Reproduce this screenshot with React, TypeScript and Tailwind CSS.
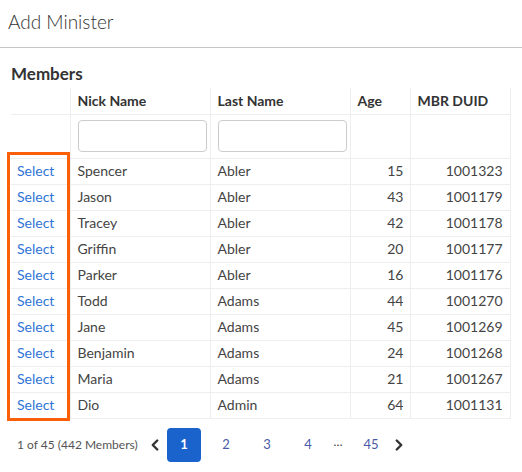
import { ChevronLeft, ChevronRight } from 'lucide-react';

const MEMBERS = [
  { nick: 'Spencer', last: 'Abler', age: 15, duid: 1001323 },
  { nick: 'Jason', last: 'Abler', age: 43, duid: 1001179 },
  { nick: 'Tracey', last: 'Abler', age: 42, duid: 1001178 },
  { nick: 'Griffin', last: 'Abler', age: 20, duid: 1001177 },
  { nick: 'Parker', last: 'Abler', age: 16, duid: 1001176 },
  { nick: 'Todd', last: 'Adams', age: 44, duid: 1001270 },
  { nick: 'Jane', last: 'Adams', age: 45, duid: 1001269 },
  { nick: 'Benjamin', last: 'Adams', age: 24, duid: 1001268 },
  { nick: 'Maria', last: 'Adams', age: 21, duid: 1001267 },
  { nick: 'Dio', last: 'Admin', age: 64, duid: 1001131 },
];

export default function App() {
  return (
    <div className="w-[522px] h-[472px] bg-white overflow-hidden font-['Lato','Open_Sans',sans-serif] text-[#333]">
      {/* modal header */}
      <div className="h-[48px] border-b border-[#c4c4c4] px-[8px] pt-[9px]">
        <h1 className="text-[19px] font-light text-[#333] leading-[26px]">Add Minister</h1>
      </div>

      <div className="px-[11px] pt-[14px]">
        <h2 className="text-[17px] font-bold text-[#333] leading-[24px] mb-[2px]">Members</h2>

        <div className="relative w-[499px]">
          <table className="w-[499px] border-collapse table-fixed text-[14px]">
            <colgroup>
              <col className="w-[59px]" />
              <col className="w-[140px]" />
              <col className="w-[140px]" />
              <col className="w-[60px]" />
              <col className="w-[100px]" />
            </colgroup>
            <thead>
              <tr className="h-[26px] border-b border-[#eeeeee]">
                <th className="border-r border-[#eeeeee]" />
                <th className="border-r border-[#eeeeee] text-left font-bold px-[7px]">Nick Name</th>
                <th className="border-r border-[#eeeeee] text-left font-bold px-[7px]">Last Name</th>
                <th className="border-r border-[#eeeeee] text-left font-bold px-[7px]">Age</th>
                <th className="border-r border-[#eeeeee] text-left font-bold px-[7px]">MBR DUID</th>
              </tr>
              <tr className="h-[44px] border-b border-[#eeeeee]">
                <th className="border-r border-[#eeeeee]" />
                <th className="border-r border-[#eeeeee] px-[7px]">
                  <input className="block w-[129px] h-[32px] border border-[#cccccc] rounded-[4px]" />
                </th>
                <th className="border-r border-[#eeeeee] px-[7px]">
                  <input className="block w-[129px] h-[32px] border border-[#cccccc] rounded-[4px]" />
                </th>
                <th className="border-r border-[#eeeeee]" />
                <th className="border-r border-[#eeeeee]" />
              </tr>
            </thead>
            <tbody>
              {MEMBERS.map((m) => (
                <tr key={m.duid} className="h-[26px] border-b border-[#eeeeee] text-[#444] leading-[24px]">
                  <td className="border-r border-[#eeeeee] pl-[6px] pb-[1px] text-[#2f74d6]">Select</td>
                  <td className="border-r border-[#eeeeee] px-[7px] pb-[1px]">{m.nick}</td>
                  <td className="border-r border-[#eeeeee] px-[7px] pb-[1px]">{m.last}</td>
                  <td className="border-r border-[#eeeeee] px-[6px] pb-[1px] text-right">{m.age}</td>
                  <td className="border-r border-[#eeeeee] px-[7px] pb-[1px] text-right">{m.duid}</td>
                </tr>
              ))}
            </tbody>
          </table>
          {/* highlight around select column */}
          <div className="absolute left-[-4px] top-[64px] w-[63px] h-[269px] border-[3px] border-[#fb6008] pointer-events-none" />
        </div>

        {/* pagination */}
        <div className="flex items-center mt-[9px] h-[34px]">
          <span className="ml-[6px] text-[12px] text-[#555] w-[128px]">1 of 45 (442 Members)</span>
          <ChevronLeft className="w-[18px] h-[18px] text-[#333] ml-[1px]" strokeWidth={3.2} />
          <button className="ml-[3px] w-[34px] h-[34px] rounded-[4px] bg-[#1a62cc] text-white text-[13px] font-bold">1</button>
          <span className="w-[50px] text-center text-[13px] text-[#4a5aa8]">2</span>
          <span className="w-[32px] text-center text-[13px] text-[#4a5aa8]">3</span>
          <span className="w-[50px] text-center text-[13px] text-[#4a5aa8]">4</span>
          <span className="w-[10px] text-center text-[12px] text-[#333] -mt-[6px]">…</span>
          <span className="w-[56px] text-center text-[13px] text-[#4a5aa8]">45</span>
          <ChevronRight className="w-[18px] h-[18px] text-[#333] -ml-[9px]" strokeWidth={3.2} />
        </div>
      </div>
    </div>
  );
}
